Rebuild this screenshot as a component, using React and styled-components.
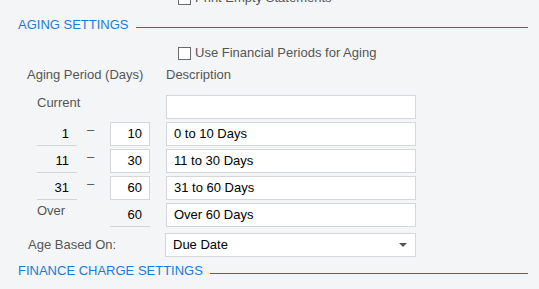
import React from 'react';
import styled, { createGlobalStyle } from 'styled-components';

const GlobalStyle = createGlobalStyle`
  html, body {
    margin: 0;
    padding: 0;
    background: #f4f5f7;
    overflow: hidden;
  }
  body {
    font-family: "Liberation Sans", Arial, sans-serif;
    font-size: 13px;
    line-height: 16px;
  }
`;

const agingRows = [
  { from: '1', to: '10', description: '0 to 10 Days' },
  { from: '11', to: '30', description: '11 to 30 Days' },
  { from: '31', to: '60', description: '31 to 60 Days' },
];

const App = () => {
  return (
    <>
      <GlobalStyle />
      <Page>
        <CheckRow $offset="-10px">
          <CheckBox />
          <CheckLabel>Print Empty Statements</CheckLabel>
        </CheckRow>

        <SectionHeader $top="11px">
          <SectionTitle>AGING SETTINGS</SectionTitle>
          <SectionLine />
        </SectionHeader>

        <CheckRow $offset="12px">
          <CheckBox />
          <CheckLabel>Use Financial Periods for Aging</CheckLabel>
        </CheckRow>

        <HeadingRow>
          <HeadingPeriod>Aging Period (Days)</HeadingPeriod>
          <Heading>Description</Heading>
        </HeadingRow>

        <Rows>
          <PeriodRow>
            <RowLabel $span={3}>Current</RowLabel>
            <TextBox />
          </PeriodRow>
          {agingRows.map((row) => (
            <PeriodRow key={row.from}>
              <ReadOnlyField>{row.from}</ReadOnlyField>
              <Dash>–</Dash>
              <NumberBox>{row.to}</NumberBox>
              <TextBox>{row.description}</TextBox>
            </PeriodRow>
          ))}
          <PeriodRow>
            <RowLabel $span={2}>Over</RowLabel>
            <ReadOnlyField>60</ReadOnlyField>
            <TextBox>Over 60 Days</TextBox>
          </PeriodRow>
        </Rows>

        <SelectRow>
          <SelectLabel>Age Based On:</SelectLabel>
          <Select>
            <span>Due Date</span>
            <Caret />
          </Select>
        </SelectRow>

        <SectionHeader $top="6px">
          <SectionTitle>FINANCE CHARGE SETTINGS</SectionTitle>
          <SectionLine />
        </SectionHeader>
      </Page>
    </>
  );
};

const Page = styled.div`
  display: flex;
  flex-direction: column;
  width: 539px;
  height: 289px;
  overflow: hidden;
  color: #000;
`;

const CheckRow = styled.label`
  display: flex;
  align-items: center;
  gap: 4px;
  height: 16px;
  margin-top: ${(p) => p.$offset};
  padding-left: 178px;
`;

const CheckBox = styled.span`
  width: 11px;
  height: 11px;
  border: 1px solid #6b6b6b;
  background: #fff;
`;

const CheckLabel = styled.span`
  color: #555;
  white-space: nowrap;
`;

const SectionHeader = styled.div`
  display: flex;
  align-items: center;
  gap: 7px;
  height: 16px;
  margin-top: ${(p) => p.$top};
  padding: 0 11px 0 18px;
`;

const SectionTitle = styled.span`
  color: #1d7bd4;
  white-space: nowrap;
`;

const SectionLine = styled.div`
  flex: 1;
  height: 1px;
  margin-top: 4px;
  background: #1a6fc6;
`;

const HeadingRow = styled.div`
  display: flex;
  height: 16px;
  margin-top: 6px;
  padding-left: 27px;
`;

const Heading = styled.span`
  color: #555;
  white-space: nowrap;
`;

const HeadingPeriod = styled(Heading)`
  width: 139px;
`;

const Rows = styled.div`
  display: flex;
  flex-direction: column;
  gap: 3px;
  margin-top: 12px;
  padding-left: 37px;
`;

const PeriodRow = styled.div`
  display: grid;
  grid-template-columns: 40px 33px 40px 266px;
  height: 24px;
`;

const RowLabel = styled.span`
  grid-column: span ${(p) => p.$span};
  color: #555;
`;

const ReadOnlyField = styled.div`
  box-sizing: border-box;
  height: 24px;
  line-height: 24px;
  padding-right: 8px;
  text-align: right;
  border-bottom: 1px solid #d4d4d4;
`;

const Dash = styled.span`
  padding-left: 10px;
  color: #555;
`;

const InputBase = styled.div`
  box-sizing: border-box;
  height: 24px;
  line-height: 22px;
  background: #fff;
  border: 1px solid #d4d6d9;
  white-space: nowrap;
`;

const NumberBox = styled(InputBase)`
  padding-right: 7px;
  text-align: right;
`;

const TextBox = styled(InputBase)`
  grid-column: 4;
  width: 250px;
  margin-left: 16px;
  padding-left: 7px;
`;

const SelectRow = styled.div`
  display: flex;
  align-items: center;
  margin-top: 6px;
  padding-left: 28px;
`;

const SelectLabel = styled.span`
  width: 137px;
  color: #555;
`;

const Select = styled(InputBase)`
  display: flex;
  align-items: center;
  justify-content: space-between;
  width: 251px;
  padding: 0 8px 0 7px;
`;

const Caret = styled.span`
  width: 0;
  height: 0;
  border-left: 4px solid transparent;
  border-right: 4px solid transparent;
  border-top: 4px solid #555;
`;

export default App;
